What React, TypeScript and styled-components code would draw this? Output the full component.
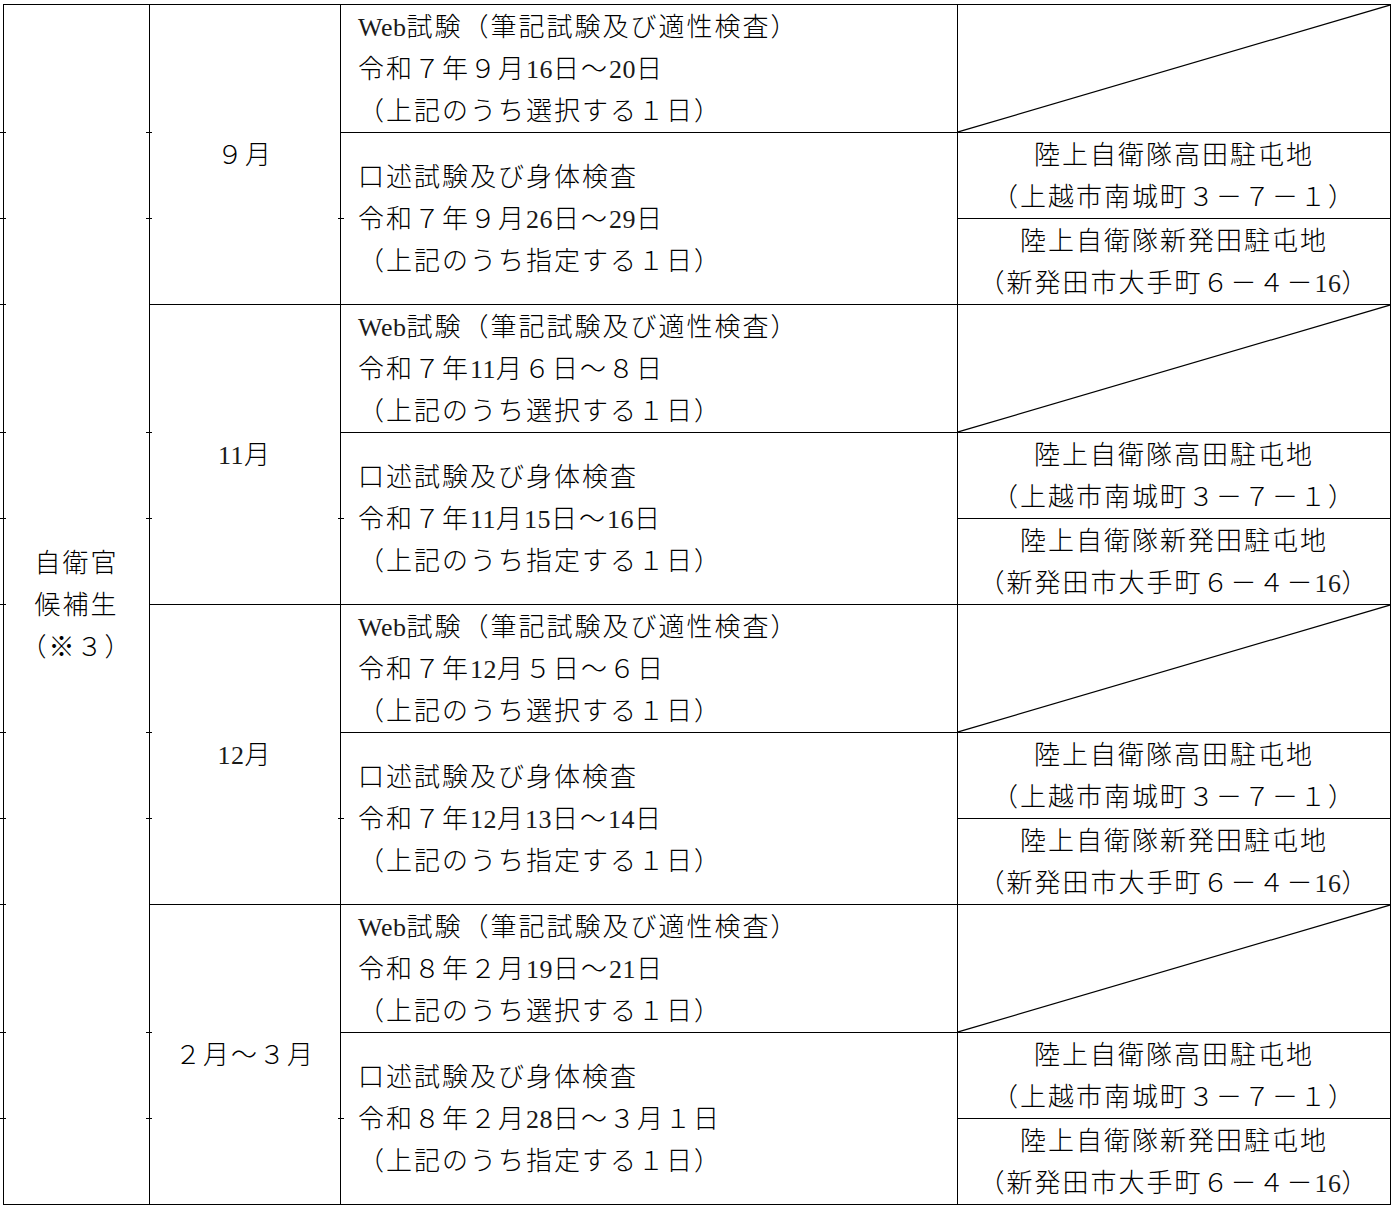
import React, { Fragment } from 'react';
import styled, { createGlobalStyle } from 'styled-components';

const GlobalStyle = createGlobalStyle`
  html, body {
    margin: 0;
    padding: 0;
    background: #ffffff;
  }
  body {
    font-family: "Liberation Serif", "Noto Sans CJK JP", serif;
    color: #000000;
  }
`;

const Page = styled.div`
  padding: 4px 0 0 3px;
  width: 1392px;
  box-sizing: border-box;
`;

const Table = styled.table`
  border-collapse: collapse;
  table-layout: fixed;
  width: 1387px;
  font-family: "Noto Sans CJK JP", sans-serif;
  font-size: 26px;
  font-weight: 300;
  letter-spacing: 2px;
  line-height: 42px;
  color: #000;
`;

const Col = styled.col<{ $w: number }>`
  width: ${(p) => p.$w}px;
`;

const Row = styled.tr<{ $h: number }>`
  height: ${(p) => p.$h}px;
`;

const Cell = styled.td`
  border: 1px solid #000;
  padding: 0;
  vertical-align: middle;
  white-space: nowrap;
  position: relative;
`;

const CategoryCell = styled(Cell)`
  text-align: center;
`;

const MonthCell = styled(Cell)`
  text-align: center;
`;

const ExamCell = styled(Cell)`
  text-align: left;
  padding-left: 17px;
`;

const PlaceCell = styled(Cell)`
  text-align: center;
`;

const DiagonalCell = styled(Cell)``;

const DiagonalSvg = styled.svg`
  position: absolute;
  inset: 0;
  width: 100%;
  height: 100%;
  display: block;
`;

const LineBox = styled.div`
  display: block;
  height: 42px;
  box-sizing: border-box;
  padding-bottom: 4px;
  line-height: 38px;
`;

const Latin = styled.span`
  font-family: "Liberation Serif", serif;
  font-weight: 400;
  font-size: 26px;
  letter-spacing: 0.5px;
  color: #1a1a1a;
`;

const Tick = styled.span<{ $top: number; $side: 'left' | 'right' }>`
  position: absolute;
  top: ${(p) => p.$top}px;
  ${(p) => (p.$side === 'left' ? 'left: -4px;' : 'right: -4px;')}
  width: 6px;
  height: 1px;
  background: #000;
`;

function Line({ text }: { text: string }) {
  const parts = text.split(/([\x20-\x7e]+)/).filter((s) => s.length > 0);
  return (
    <LineBox>
      {parts.map((p, i) =>
        /^[\x20-\x7e]+$/.test(p) ? <Latin key={i}>{p}</Latin> : <Fragment key={i}>{p}</Fragment>
      )}
    </LineBox>
  );
}

type Block = {
  month: string;
  web: string;
  oral: string;
};

const blocks: Block[] = [
  { month: '９月', web: '令和７年９月16日～20日', oral: '令和７年９月26日～29日' },
  { month: '11月', web: '令和７年11月６日～８日', oral: '令和７年11月15日～16日' },
  { month: '12月', web: '令和７年12月５日～６日', oral: '令和７年12月13日～14日' },
  { month: '２月～３月', web: '令和８年２月19日～21日', oral: '令和８年２月28日～３月１日' },
];

const categoryTicks: number[] = [];
blocks.forEach((_, i) => {
  categoryTicks.push(i * 300 + 127, i * 300 + 213);
  if (i < blocks.length - 1) categoryTicks.push(i * 300 + 299);
});

export default function App() {
  return (
    <>
      <GlobalStyle />
      <Page>
        <Table>
          <colgroup>
            <Col $w={146} />
            <Col $w={191} />
            <Col $w={617} />
            <Col $w={433} />
          </colgroup>
          <tbody>
            {blocks.map((b, i) => (
              <Fragment key={b.month}>
                <Row $h={128}>
                  {i === 0 && (
                    <CategoryCell rowSpan={blocks.length * 3}>
                      {categoryTicks.map((t) => (
                        <Tick key={t} $top={t} $side="left" />
                      ))}
                      <Line text="自衛官" />
                      <Line text="候補生" />
                      <Line text="（※３）" />
                    </CategoryCell>
                  )}
                  <MonthCell rowSpan={3}>
                    <Tick $top={127} $side="left" />
                    <Tick $top={213} $side="left" />
                    <Tick $top={213} $side="right" />
                    <Line text={b.month} />
                  </MonthCell>
                  <ExamCell>
                    <Line text="Web試験（筆記試験及び適性検査）" />
                    <Line text={b.web} />
                    <Line text="（上記のうち選択する１日）" />
                  </ExamCell>
                  <DiagonalCell>
                    <DiagonalSvg preserveAspectRatio="none" viewBox="0 0 100 100">
                      <line
                        x1="0"
                        y1="100"
                        x2="100"
                        y2="0"
                        stroke="#000"
                        strokeWidth="1.2"
                        vectorEffect="non-scaling-stroke"
                      />
                    </DiagonalSvg>
                  </DiagonalCell>
                </Row>
                <Row $h={86}>
                  <ExamCell rowSpan={2}>
                    <Line text="口述試験及び身体検査" />
                    <Line text={b.oral} />
                    <Line text="（上記のうち指定する１日）" />
                  </ExamCell>
                  <PlaceCell>
                    <Line text="陸上自衛隊高田駐屯地" />
                    <Line text="（上越市南城町３－７－１）" />
                  </PlaceCell>
                </Row>
                <Row $h={86}>
                  <PlaceCell>
                    <Line text="陸上自衛隊新発田駐屯地" />
                    <Line text="（新発田市大手町６－４－16）" />
                  </PlaceCell>
                </Row>
              </Fragment>
            ))}
          </tbody>
        </Table>
      </Page>
    </>
  );
}
